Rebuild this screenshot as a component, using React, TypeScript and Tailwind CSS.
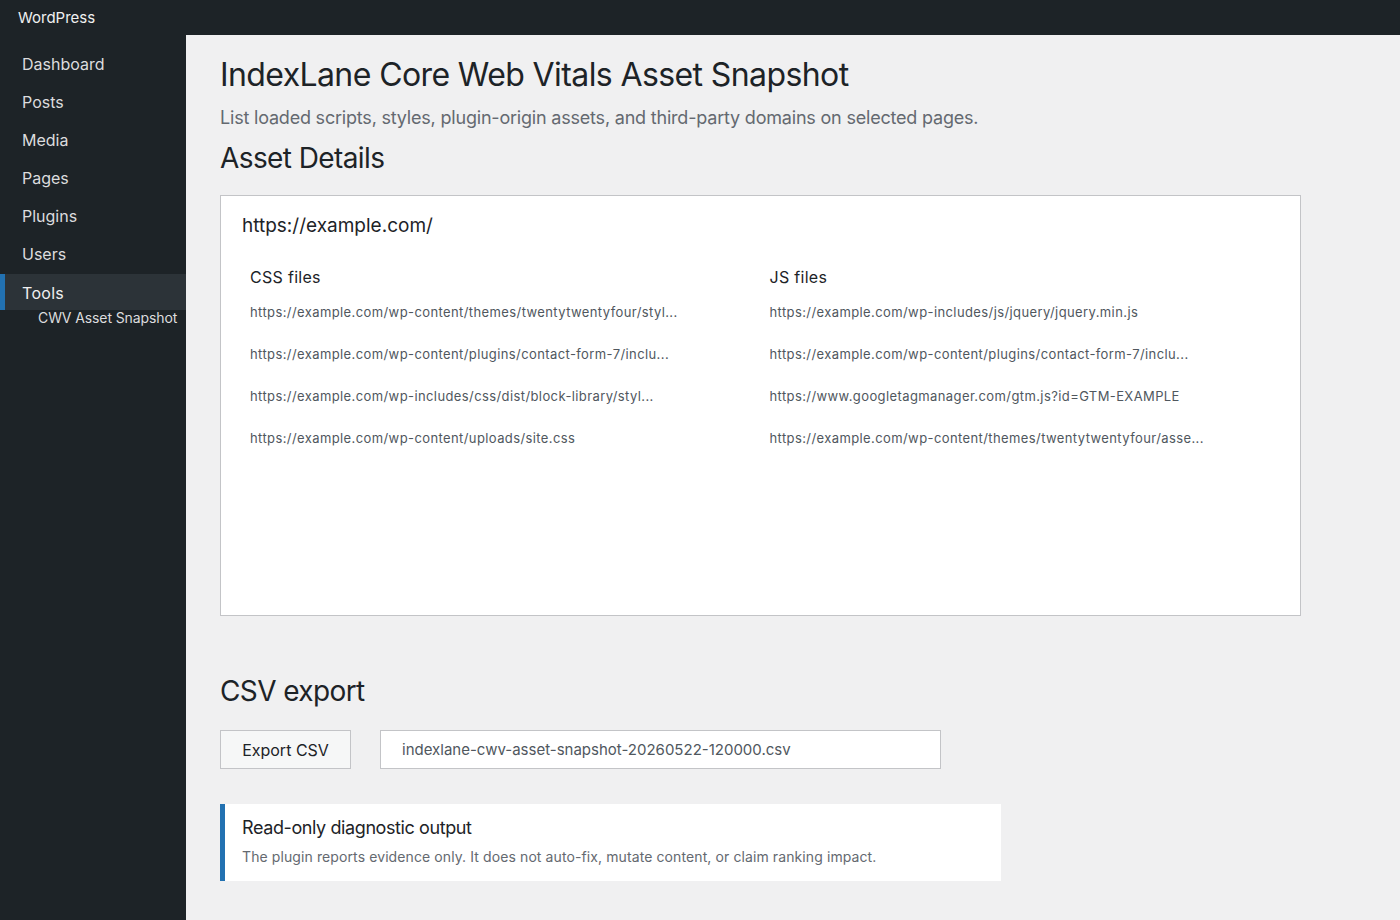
const menu = ["Dashboard", "Posts", "Media", "Pages", "Plugins", "Users"];

const cssFiles = [
  "https://example.com/wp-content/themes/twentytwentyfour/styl...",
  "https://example.com/wp-content/plugins/contact-form-7/inclu...",
  "https://example.com/wp-includes/css/dist/block-library/styl...",
  "https://example.com/wp-content/uploads/site.css",
];

const jsFiles = [
  "https://example.com/wp-includes/js/jquery/jquery.min.js",
  "https://example.com/wp-content/plugins/contact-form-7/inclu...",
  "https://www.googletagmanager.com/gtm.js?id=GTM-EXAMPLE",
  "https://example.com/wp-content/themes/twentytwentyfour/asse...",
];

function FileColumn({ title, files }: { title: string; files: string[] }) {
  return (
    <div className="px-2">
      <h4 className="text-[16px] leading-5 tracking-[0.3px] text-[#1d2327]">{title}</h4>
      <ul className="mt-[15px] flex flex-col gap-[22px]">
        {files.map((f) => (
          <li key={f} className="text-[13px] leading-5 tracking-[0.4px] text-[#50575e]">
            {f}
          </li>
        ))}
      </ul>
    </div>
  );
}

export default function App() {
  return (
    <div
      className="flex min-h-[920px] flex-col bg-[#f0f0f1]"
      style={{ fontFamily: "Inter, 'Noto Sans', sans-serif" }}
    >
      {/* Admin bar */}
      <div className="flex h-[35px] items-center bg-[#1d2327] px-[18px] pt-[2px] text-[15px] text-[#f0f0f1]">
        WordPress
      </div>

      <div className="flex flex-1">
        {/* Sidebar */}
        <nav className="w-[186px] shrink-0 bg-[#1d2327] pt-[10px] text-[#dcdcde]">
          {menu.map((m) => (
            <div key={m} className="flex h-[38px] items-center px-[22px] text-[16px]">
              {m}
            </div>
          ))}
          <div className="mt-[1px] flex h-[36px] items-center border-l-[5px] border-[#2271b1] bg-[#2c3338] pl-[17px] pt-[1px] text-[16px] tracking-[0.3px] text-[#f0f0f1]">
            Tools
          </div>
          <div className="pl-[38px] pt-[1px] text-[14px] leading-[14px] tracking-[-0.1px] text-[#dcdcde]">
            CWV Asset Snapshot
          </div>
        </nav>

        {/* Main */}
        <main className="flex-1 pl-[34px] pr-[99px] pt-[20px] text-[#1d2327]">
          <h1 className="text-[32px] leading-10 tracking-[-0.6px]">
            IndexLane Core Web Vitals Asset Snapshot
          </h1>
          <p className="mt-[9px] text-[18px] leading-7 tracking-[-0.2px] text-[#646970]">
            List loaded scripts, styles, plugin-origin assets, and third-party domains on selected pages.
          </p>
          <h2 className="mt-[10px] text-[28px] leading-8 tracking-[-0.6px]">Asset Details</h2>

          <div className="mt-[21px] h-[421px] border border-[#c3c4c7] bg-white pl-[21px] pr-[19px] pt-[16px]">
            <h3 className="text-[19px] leading-7">https://example.com/</h3>
            <div className="mt-[27px] grid grid-cols-2 gap-0">
              <FileColumn title="CSS files" files={cssFiles} />
              <FileColumn title="JS files" files={jsFiles} />
            </div>
          </div>

          <h2 className="mt-[59px] text-[28px] leading-8 tracking-[-0.6px]">CSV export</h2>
          <div className="mt-[23px] flex items-center gap-[29px]">
            <button
              type="button"
              className="h-[39px] w-[131px] border border-[#c3c4c7] bg-[#f6f7f7] text-[16px] text-[#1d2327]"
            >
              Export CSV
            </button>
            <input
              readOnly
              value="indexlane-cwv-asset-snapshot-20260522-120000.csv"
              className="h-[39px] w-[561px] border border-[#c3c4c7] bg-white px-[21px] text-[15px] text-[#50575e] outline-none"
            />
          </div>

          <div className="mt-[35px] w-[781px] border-l-[5px] border-[#2271b1] bg-white px-[17px] pb-[14px] pt-[12px]">
            <p className="text-[18px] leading-6 tracking-[-0.4px]">Read-only diagnostic output</p>
            <p className="mt-[7px] text-[14px] leading-5 tracking-[0.1px] text-[#646970]">
              The plugin reports evidence only. It does not auto-fix, mutate content, or claim ranking impact.
            </p>
          </div>
        </main>
      </div>
    </div>
  );
}
